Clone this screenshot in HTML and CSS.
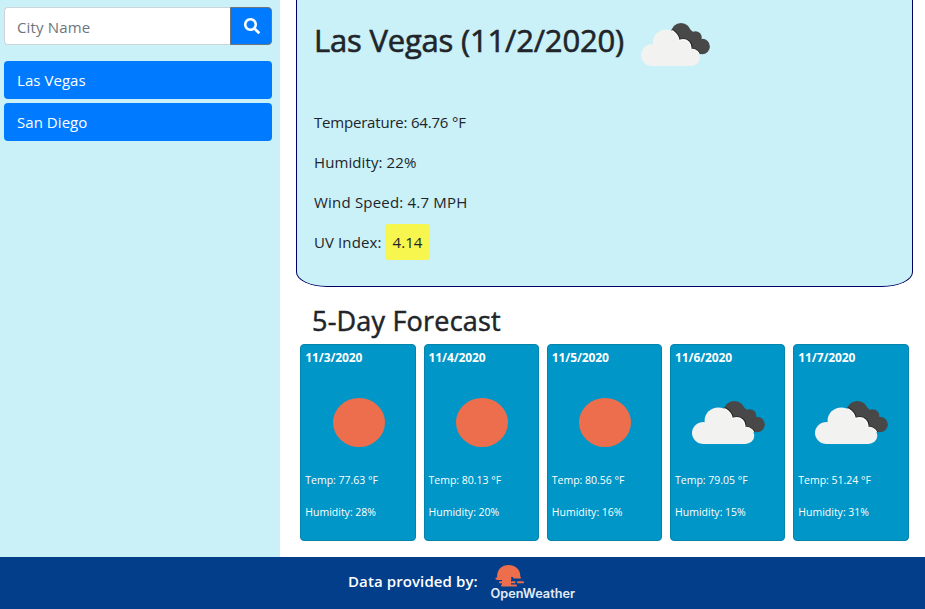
FILE: index.html
```html
<!DOCTYPE html>
<html lang="en">
<head>
<meta charset="utf-8">
<title>Weather Dashboard</title>
<link rel="stylesheet" href="styles.css">
</head>
<body>
<svg class="defs" aria-hidden="true">
  <clipPath id="back-cloud"><circle cx="40" cy="9.8" r="9.8"/><circle cx="54.5" cy="14.5" r="6.2"/><circle cx="61.2" cy="23.5" r="7.7"/><path d="M34 10L45 3L57 13L61 31L48 31Z"/></clipPath>
  <symbol id="clouds" viewBox="0 0 69 43" preserveAspectRatio="none">
    <g fill="#484848"><circle cx="40" cy="9.8" r="9.8"/><circle cx="54.5" cy="14.5" r="6.2"/><circle cx="61.2" cy="23.5" r="7.7"/><path d="M34 10L45 3L57 13L59 28L48 28Z"/></g>
    <g clip-path="url(#back-cloud)">
      <g fill="#222"><circle cx="25.8" cy="18.9" r="13.8"/><circle cx="42.7" cy="24" r="8.7"/><circle cx="51" cy="34" r="9"/></g>
      <g fill="#fff"><circle cx="25.3" cy="19.2" r="13.4"/><circle cx="42.2" cy="24.3" r="8.3"/><circle cx="50.6" cy="34.2" r="8.8"/></g>
    </g>
    <g fill="#f2f2f0"><circle cx="11" cy="32" r="11"/><circle cx="24.9" cy="19.5" r="13"/><circle cx="41.6" cy="24.9" r="7.6"/><circle cx="50.4" cy="34.5" r="8.5"/><path d="M11 43L11 30L25 18L42 24L50 34L50.4 43Z"/></g>
  </symbol>
  <symbol id="sun" viewBox="0 0 52 49" preserveAspectRatio="none"><ellipse cx="26" cy="24.5" rx="26" ry="24.5" fill="#ec6e4c"/></symbol>
</svg>
<div class="page">
  <aside class="sidebar">
    <form class="search">
      <input class="search-input" type="text" placeholder="City Name">
      <button class="search-button" type="button" aria-label="Search"><svg viewBox="0 0 512 512" width="16" height="16"><path fill="currentColor" d="M505 442.700L405.300 343c-4.500-4.500-10.600-7-17-7H372c27.600-35.300 44-79.700 44-128C416 93.100 322.900 0 208 0S0 93.100 0 208s93.100 208 208 208c48.300 0 92.700-16.400 128-44v16.300c0 6.400 2.500 12.500 7 17l99.700 99.700c9.400 9.400 24.600 9.400 33.900 0l28.300-28.300c9.400-9.400 9.400-24.600.1-34zM208 336c-70.700 0-128-57.200-128-128 0-70.700 57.200-128 128-128 70.700 0 128 57.200 128 128 0 70.700-57.200 128-128 128z"/></svg></button>
    </form>
    <div class="cities"><button class="city">Las Vegas</button><button class="city">San Diego</button></div>
  </aside>
  <main class="content">
    <section class="current">
      <div class="current-head"><h1 class="title">Las Vegas (11/2/2020)</h1><svg class="current-icon"><use href="#clouds"/></svg></div>
      <p class="stat stat-temp">Temperature: 64.76 °F</p>
      <p class="stat">Humidity: 22%</p>
      <p class="stat stat-wind">Wind Speed: 4.7 MPH</p>
      <p class="stat">UV Index: <span class="uv">4.14</span></p>
    </section>
    <h2 class="subtitle">5-Day Forecast</h2>
    <section class="forecast">
      <article class="card"><h3 class="date">11/3/2020</h3><div class="picture"><svg class="sun"><use href="#sun"/></svg></div><p class="detail">Temp: 77.63 °F</p><p class="detail">Humidity: 28%</p></article>
      <article class="card"><h3 class="date">11/4/2020</h3><div class="picture"><svg class="sun"><use href="#sun"/></svg></div><p class="detail">Temp: 80.13 °F</p><p class="detail">Humidity: 20%</p></article>
      <article class="card"><h3 class="date">11/5/2020</h3><div class="picture"><svg class="sun"><use href="#sun"/></svg></div><p class="detail">Temp: 80.56 °F</p><p class="detail">Humidity: 16%</p></article>
      <article class="card"><h3 class="date">11/6/2020</h3><div class="picture"><svg class="clouds"><use href="#clouds"/></svg></div><p class="detail">Temp: 79.05 °F</p><p class="detail">Humidity: 15%</p></article>
      <article class="card"><h3 class="date">11/7/2020</h3><div class="picture"><svg class="clouds"><use href="#clouds"/></svg></div><p class="detail">Temp: 51.24 °F</p><p class="detail">Humidity: 31%</p></article>
    </section>
  </main>
</div>
<footer class="footer">
  <span class="credit">Data provided by:</span>
  <svg class="logo" viewBox="0 0 88 40" width="88" height="40">
    <g fill="#ec6e4c"><path d="M7.500 16C5.500 7 11 1 18.500 1S31.500 7 30 13H21v3z"/><rect x="5.500" y="13.500" width="16" height="2.300" rx="1"/><rect x="23" y="12.500" width="8" height="2" rx="1"/><rect x="9" y="17.300" width="11" height="2" rx=".9"/><rect x="21" y="17.300" width="4.500" height="2" rx=".9"/><rect x="27" y="17.300" width="7" height="2" rx=".9"/><rect x="12" y="15" width="9" height="6"/><rect x="11" y="20.500" width="16" height="2" rx="1"/></g>
    <text class="logo-text" x="0.500" y="34" textLength="84.500" lengthAdjust="spacingAndGlyphs">OpenWeather</text>
  </svg>
</footer>
</body>
</html>
```
FILE: styles.css
```css
* { box-sizing: border-box; }
body { margin: 0; height: 609px; overflow: hidden; display: flex; flex-direction: column; background: #fff; color: #212529; font-family: "Open Sans", "Noto Sans", sans-serif; font-size: 15px; line-height: 24px; }
h1, h2, h3, p { margin: 0; white-space: nowrap; }
.defs { position: absolute; width: 0; height: 0; }
.page { display: flex; height: 557px; }
.sidebar { width: 280px; background: #caf0f8; padding: 7px 8px 0 4px; }
.search { display: flex; height: 38px; margin-bottom: 16px; }
.search-input { flex: 1; min-width: 0; border: 1px solid #ced4da; border-right: 0; border-radius: 4px 0 0 4px; padding: 2px 12px 0; background: #fff; font: inherit; letter-spacing: .15px; }
.search-input::placeholder { color: #6c757d; opacity: 1; }
.search-button { width: 42px; border: 1px solid #6c757d; border-radius: 0 4px 4px 0; background: #007bff; color: #fff; padding: 0 0 1px 1px; display: flex; align-items: center; justify-content: center; }
.cities { display: flex; flex-direction: column; gap: 4px; }
.city { height: 38px; border: 0; border-radius: 4px; background: #007bff; color: #fff; font: inherit; letter-spacing: .05px; text-align: left; padding: 0 13px 1px; }
.content { flex: 1; padding: 0 12px 0 16px; }
.current { height: 287px; background: #caf0f8; border: 1px solid #000066; border-top: 0; border-radius: 0 0 31px 31px / 0 0 15px 15px; padding: 16px 17px 0; }
.current-head { display: flex; align-items: flex-start; height: 94px; gap: 17px; }
.title { width: 310px; font-size: 31px; font-weight: 500; line-height: 49px; letter-spacing: -.2px; -webkit-text-stroke: .6px; }
.current-icon { width: 69px; height: 43px; margin-top: 7px; }
.stat { height: 40px; letter-spacing: .1px; }
.stat-temp { letter-spacing: -.2px; }
.stat-wind { letter-spacing: .2px; }
.uv { padding: 8px 7px; background: #f6f64f; border-radius: 4px; }
.subtitle { height: 57px; padding: 14px 16px 0; font-size: 27px; font-weight: 500; line-height: 39px; letter-spacing: .2px; -webkit-text-stroke: .5px; }
.forecast { display: grid; grid-template-columns: repeat(5, 1fr); gap: 8px; height: 197px; margin: 0 4.5px 0 4.25px; }
.card { min-width: 0; background: #0096c7; color: #fff; border: 1px solid #0483ad; border-radius: 4px; padding: 0 4px; }
.date { font-size: 12px; font-weight: 700; line-height: 26px; letter-spacing: -.1px; }
.picture { height: 93px; display: flex; justify-content: center; align-items: center; padding: 10px 0 0 2px; }
.sun { width: 52px; height: 49px; }
.clouds { width: 73px; height: 43px; }
.detail { height: 32px; line-height: 32px; font-size: 10.5px; }
.footer { height: 52px; background: #023e8a; color: #fff; display: flex; padding: 6px 0 0 348px; }
.credit { width: 142px; white-space: nowrap; font-weight: 600; line-height: 36px; letter-spacing: .1px; }
.logo { margin-top: 1px; }
.logo-text { fill: #e4ebf4; font: 600 12.5px Inter, sans-serif; }
```
